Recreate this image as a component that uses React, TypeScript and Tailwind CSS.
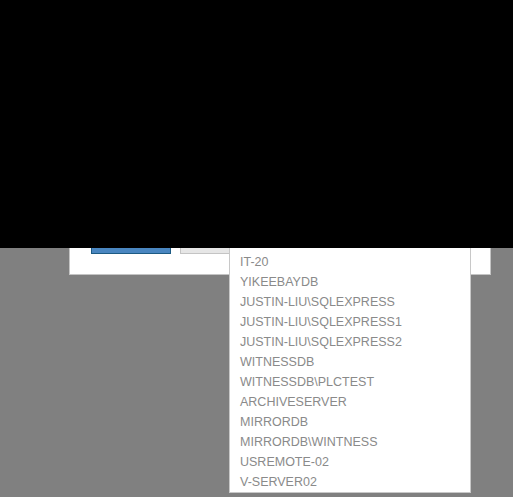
const servers = [
  "IT-20",
  "YIKEEBAYDB",
  "JUSTIN-LIU\\SQLEXPRESS",
  "JUSTIN-LIU\\SQLEXPRESS1",
  "JUSTIN-LIU\\SQLEXPRESS2",
  "WITNESSDB",
  "WITNESSDB\\PLCTEST",
  "ARCHIVESERVER",
  "MIRRORDB",
  "MIRRORDB\\WINTNESS",
  "USREMOTE-02",
  "V-SERVER02",
];

export default function App() {
  return (
    <div className="relative h-[497px] w-[513px] overflow-hidden bg-[#808080] font-['Liberation_Sans',Arial,sans-serif]">
      {/* black overlay at top */}
      <div className="relative z-20 h-[248px] w-full bg-black" />

      {/* dialog footer */}
      <div className="pl-[69px]">
        <div className="w-[422px] border-x border-b border-[#c4c4c4] bg-white pb-[20px] pl-[21px]">
          <div className="flex h-[6px] gap-[9px]">
            <div className="h-full w-[80px] border-x border-b border-[#1d5b84] bg-[#4a86c0]" />
            <div className="h-full w-[80px] border-x border-b border-[#c4c4c4] bg-[#e6e6e6]" />
          </div>
        </div>
      </div>

      {/* open dropdown list */}
      <ul className="absolute left-[229px] top-[248px] z-10 w-[242px] border-x border-b border-[#c8c8c8] bg-white pt-[4px]">
        {servers.map((s) => (
          <li
            key={s}
            className="h-[20px] whitespace-nowrap pl-[10px] pt-[1px] text-[12.5px] leading-[19px] text-[#8a8a8a]"
          >
            {s}
          </li>
        ))}
      </ul>
    </div>
  );
}
